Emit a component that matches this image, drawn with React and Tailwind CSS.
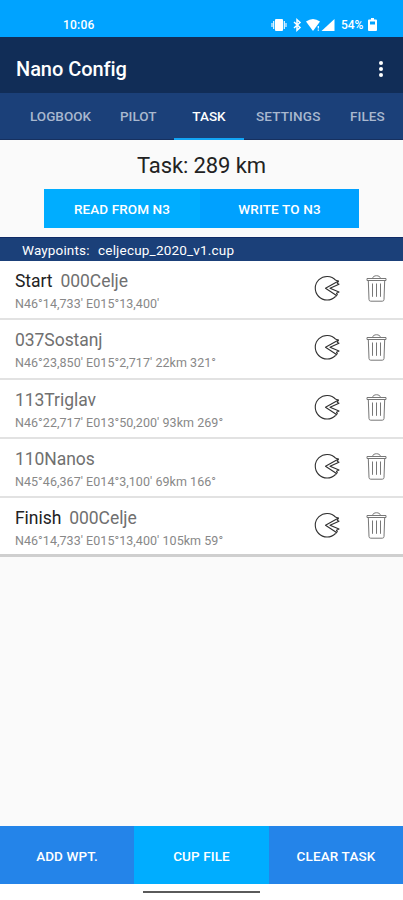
const waypoints = [
  { role: 'Start', name: '000Celje', info: "N46°14,733' E015°13,400'" },
  { name: '037Sostanj', info: "N46°23,850' E015°2,717' 22km 321°" },
  { name: '113Triglav', info: "N46°22,717' E013°50,200' 93km 269°" },
  { name: '110Nanos', info: "N45°46,367' E014°3,100' 69km 166°" },
  { role: 'Finish', name: '000Celje', info: "N46°14,733' E015°13,400' 105km 59°" },
];

function SectorIcon() {
  return (
    <svg className="block h-[26px] w-[26px]" viewBox="0 0 26 26" fill="none" stroke="#303030" strokeWidth="1.1" strokeLinejoin="round">
      <path d="M21.800 5.300A11.800 11.800 0 1 0 21.500 21.500" />
      <path d="M21.800 5.300 24.500 6 11.500 13.300 22.500 20.500 21.500 21.500" />
      <path d="M24.500 6 23.300 8.200 25 9.300 16 13.300 25 17 22.500 18.200 23.500 20.300" />
    </svg>
  );
}

function TrashIcon() {
  return (
    <svg className="block h-[27px] w-[21px]" viewBox="0 0 21 27" fill="none" stroke="#777" strokeWidth="1">
      <path d="M1 3.500h19v2H1ZM6.500 3.500c.3-3.700 7.700-3.700 8 0M2.300 5.500l.7 19q.1 1.700 1.700 1.700h11.600q1.600 0 1.700-1.700l.7-19" />
      <path d="M6.500 8.500v13.300M10.500 8.500v13.300M14.500 8.500v13.300" />
    </svg>
  );
}

function StatusIcons() {
  return (
    <svg className="block h-[16px] w-[64px]" viewBox="0 0 64 16" fill="white">
      <rect x="4" y="2" width="8" height="12" rx="1" />
      <path d="M2.700 4v8M13.300 4v8M1 6v4M15 6v4" stroke="white" strokeWidth="1.100" />
      <path d="m23 5 6 5.500-3 2.800V2.700L29 5.500 23 11" fill="none" stroke="white" strokeWidth="1.500" />
      <path d="M35 4.500Q42-.5 49 4.500L42 14Z" />
      <path d="M47.300 9v2.500M47.300 12.500v1.300" stroke="white" strokeWidth="1.200" />
      <path d="M50.500 14 63.500 2v12Z" />
    </svg>
  );
}

export default function App() {
  return (
    <div className="flex h-[900px] w-[403px] flex-col overflow-hidden bg-[#fafafa] font-[Roboto,sans-serif] whitespace-pre">
      <div className="flex h-[37px] shrink-0 items-center bg-[#00a3ff] pt-[12px] pl-[63px] text-[12px] font-medium text-white">
        <span className="w-[208px] tracking-[0.200px]">10:06</span>
        <StatusIcons />
        <span className="ml-[6px] w-[27px] tracking-[-0.100px]">54%</span>
        <svg className="block h-[13px] w-[9px]" viewBox="0 0 9 13">
          <path d="M3 0h3v1.500h2q1 0 1 1V12q0 1-1 1H1q-1 0-1-1V2.500q0-1 1-1h2Z" fill="white" />
          <path d="M2 3.500h5v3H2Z" fill="#00a3ff" />
        </svg>
      </div>

      <header className="flex h-[56px] shrink-0 items-center justify-between bg-[#112d57] pt-[7px] pr-[20px] pl-[16px]">
        <h1 className="text-[20px] font-medium tracking-[-0.050px] text-white">Nano Config</h1>
        <div className="flex flex-col gap-[2px]">
          <i className="h-[4px] w-[4px] rounded-full bg-white" />
          <i className="h-[4px] w-[4px] rounded-full bg-white" />
          <i className="h-[4px] w-[4px] rounded-full bg-white" />
        </div>
      </header>

      <nav className="flex h-[47px] shrink-0 border-b border-[#16305f] bg-[#1b4079] pl-[30px] text-[13.500px] leading-[47px] font-medium text-[#a9b8cf]">
        <span className="w-[90px]">LOGBOOK</span>
        <span className="w-[54px]">PILOT</span>
        <span className="h-[47px] w-[70px] border-b-2 border-[#12a5f5] text-center text-white">TASK</span>
        <span className="ml-[12px] w-[94px] tracking-[0.150px]">SETTINGS</span>
        <span className="tracking-[0.100px]">FILES</span>
      </nav>

      <div className="h-[49px] shrink-0 pt-[11px] text-center text-[22px] leading-[30px] tracking-[-0.100px] text-[#222]">Task: 289 km</div>

      <div className="mx-[44px] flex h-[39px] shrink-0 text-center text-[13.500px] leading-[40px] font-medium text-white">
        <button className="w-[156px] bg-[#00adff] tracking-[0.100px]">READ FROM N3</button>
        <button className="flex-1 bg-[#00a1ff] tracking-[0.150px]">WRITE TO N3</button>
      </div>

      <div className="mt-[9px] flex h-[24px] shrink-0 border-t border-[#102b66] bg-[#1b4079] pl-[22px] text-[13.500px] leading-[24px] text-white">
        <span className="w-[76px] tracking-[0.150px]">Waypoints:</span>
        <span className="tracking-[0.200px]">celjecup_2020_v1.cup</span>
      </div>

      <ul className="shrink-0 bg-white">
        {waypoints.map((w) => (
          <li key={w.info} className="flex h-[59.300px] items-start border-b-2 border-[#e2e2e2] pl-[15px] last:border-b-[3px] last:border-[#cfcfcf]">
            <div className="w-[299px] pt-[9px]">
              <div className="text-[17.500px] leading-[23px] tracking-[-0.050px] text-[#707070]">
                {w.role && <span className="mr-[8px] text-[#222]">{w.role}</span>}
                <span>{w.name}</span>
              </div>
              <div className="pt-[2px] text-[12.500px] leading-[18px] tracking-[0.050px] text-[#888]">{w.info}</div>
            </div>
            <div className="flex pt-[14px]">
              <SectorIcon />
              <div className="ml-[26px]"><TrashIcon /></div>
            </div>
          </li>
        ))}
      </ul>

      <div className="flex-1" />

      <footer className="flex h-[58px] shrink-0 text-center text-[13.500px] leading-[60px] font-medium text-white">
        <button className="w-[134px] bg-[#2484e9] tracking-[0.100px]">ADD WPT.</button>
        <button className="w-[135px] bg-[#00adff] tracking-[0.100px]">CUP FILE</button>
        <button className="flex-1 bg-[#2484e9] tracking-[0.150px]">CLEAR TASK</button>
      </footer>
      <div className="h-[16px] shrink-0 bg-white pt-[7px]">
        <div className="mx-auto h-[2px] w-[117px] bg-[#5a5a5a]" />
      </div>
    </div>
  );
}
